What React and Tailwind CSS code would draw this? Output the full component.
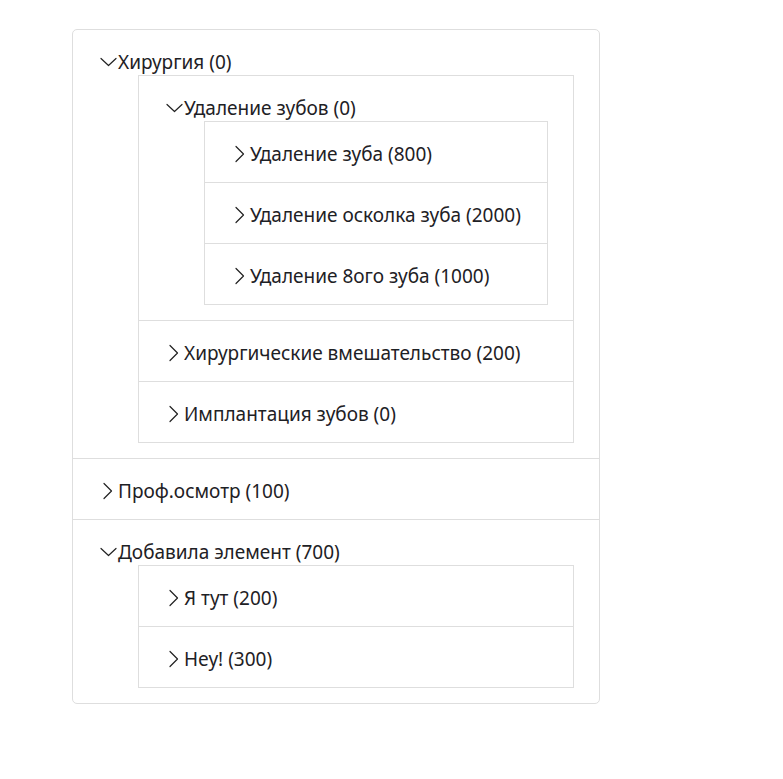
import React from "react";

const data = [
  {
    label: "Хирургия (0)",
    open: true,
    children: [
      {
        label: "Удаление зубов (0)",
        open: true,
        children: [
          { label: "Удаление зуба (800)" },
          { label: "Удаление осколка зуба (2000)" },
          { label: "Удаление 8ого зуба (1000)" },
        ],
      },
      { label: "Хирургические вмешательство (200)" },
      { label: "Имплантация зубов (0)" },
    ],
  },
  { label: "Проф.осмотр (100)" },
  {
    label: "Добавила элемент (700)",
    open: true,
    children: [{ label: "Я тут (200)" }, { label: "Hey! (300)" }],
  },
];

function Chevron({ open }) {
  return (
    <svg width="18" height="18" viewBox="0 0 18 18" className="shrink-0 mt-[3px]" fill="none" stroke="#222" strokeWidth="1.2" strokeLinecap="round" strokeLinejoin="round">
      {open ? <path d="M1 5.5 L8.5 12.5 L16 5.5" /> : <path d="M4 1.5 L11.5 9 L4 16.5" />}
    </svg>
  );
}

function Item({ item }) {
  const open = item.open && item.children;
  return (
    <div className={`border-t border-[#dedede] first:border-t-0 pl-[27px] pr-[25px] pt-4 ${open ? "pb-[15px]" : "pb-4"}`}>
      <div className="flex items-center h-7 leading-7">
        <Chevron open={item.open} />
        <span className="mt-[3px]">{item.label}</span>
      </div>
      {open && (
        <div className="ml-[38px] mt-px border border-[#dedede]">
          {item.children.map((c, i) => (
            <Item key={i} item={c} />
          ))}
        </div>
      )}
    </div>
  );
}

export default function App() {
  return (
    <div className="pt-[29px] pl-[72px] bg-white min-h-screen" style={{ fontFamily: '"Noto Sans", sans-serif' }}>
      <div className="w-[528px] border border-[#dedede] rounded-[5px] text-[19px] text-[#1e2125]">
        {data.map((d, i) => (
          <Item key={i} item={d} />
        ))}
      </div>
    </div>
  );
}
